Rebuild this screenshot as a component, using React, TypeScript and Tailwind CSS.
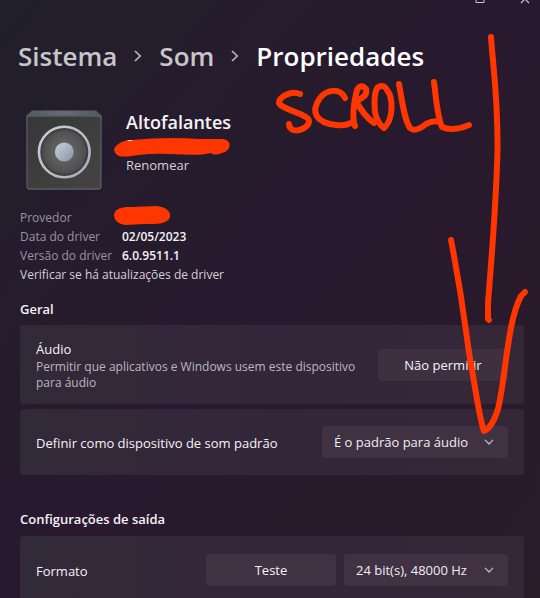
import React from "react";

function Chevron({ className }: { className: string }) {
  return (
    <svg aria-hidden="true" viewBox="0 0 10 10" className={className} fill="none" stroke="currentColor" strokeWidth="1.2" strokeLinecap="round" strokeLinejoin="round">
      <path d="M1.2 3.2 5 7l3.8-3.8" />
    </svg>
  );
}

function Crumb() {
  return (
    <svg aria-hidden="true" viewBox="0 0 8 12" className="h-3 w-2 shrink-0 text-[#b9b5bd]" fill="none" stroke="currentColor" strokeWidth="1.7">
      <path d="M1 1l5.2 5L1 11" />
    </svg>
  );
}

function Speaker() {
  return (
    <svg aria-hidden="true" viewBox="0 0 76 80" className="h-20 w-[76px] shrink-0">
      <defs>
        <linearGradient id="box" x1="0" y1="0" x2="1" y2="1">
          <stop offset="0" stopColor="#373737" />
          <stop offset="1" stopColor="#454443" />
        </linearGradient>
        <linearGradient id="lid" x1="0" y1="0" x2="1" y2="0">
          <stop offset="0" stopColor="#505860" />
          <stop offset="0.5" stopColor="#666d76" />
          <stop offset="1" stopColor="#505860" />
        </linearGradient>
        <linearGradient id="ring" x1="0" y1="0" x2="1" y2="1">
          <stop offset="0" stopColor="#c9d2dc" />
          <stop offset="1" stopColor="#a3aeba" />
        </linearGradient>
        <radialGradient id="cone">
          <stop offset="0.3" stopColor="#626262" />
          <stop offset="0.8" stopColor="#515151" />
          <stop offset="1" stopColor="#303134" />
        </radialGradient>
        <linearGradient id="cap" x1="0" y1="0" x2="1" y2="1">
          <stop offset="0" stopColor="#c8d2dd" />
          <stop offset="1" stopColor="#8994a1" />
        </linearGradient>
      </defs>
      <path d="M6 .5h64l5.5 5V10H.5V5.5z" fill="url(#lid)" />
      <rect x="1" y="6" width="74" height="73" rx="2.5" fill="url(#box)" stroke="#565d64" strokeWidth="1.3" />
      <circle cx="38.3" cy="42" r="25.3" fill="url(#cone)" stroke="url(#ring)" strokeWidth="2.6" />
      <circle cx="38.3" cy="42" r="9.4" fill="url(#cap)" />
    </svg>
  );
}

function Card({ className, children }: { className: string; children: React.ReactNode }) {
  return (
    <div className={`flex items-center justify-between rounded bg-linear-to-r from-[#312a38] via-[#342639] to-[#352738] px-4 ${className}`}>
      {children}
    </div>
  );
}

function Dropdown({ id, value, className }: { id: string; value: string; className: string }) {
  return (
    <div className={`relative ${className}`}>
      <select id={id} defaultValue={value} className="h-8 w-full appearance-none rounded bg-[#403243] pl-3 pr-8 pt-[2px] text-[13px] text-[#f0edf1]">
        <option>{value}</option>
      </select>
      <Chevron className="pointer-events-none absolute right-[14px] top-[11px] size-[10px] text-[#c5c0c8]" />
    </div>
  );
}

function Marker() {
  return (
    <svg aria-hidden="true" viewBox="0 0 540 598" className="pointer-events-none absolute left-0 top-0 h-[598px] w-[540px]" fill="none" stroke="#ff3600" strokeLinecap="round" strokeLinejoin="round">
      <g strokeWidth="6">
        <path d="M300 94C291 90 279 97 279 103C282 110 309 114 309 121C309 127 299 132 293 130Q289 128 289 124" />
        <path d="M345 98C340 88 327 89 320 98C310 112 316 123 336 125Q345 126 351 123" />
        <path d="M355 126C351 115 355 98 357 90Q361 83 366 89C368 95 361 99 356 101Q364 116 374 123" />
        <path d="M382 86C374 85 374 100 375 112Q377 123 384 128C394 119 393 97 387 90Q385 86 382 86" />
        <path d="M399 84C402 100 404 119 410 128Q415 133 426 124Q434 120 440 122" />
        <path d="M434 82C436 97 437 116 442 127Q452 132 469 125" />
        <path d="M491 37C493 67 498 96 497.5 150C496 210 491 264 488 303V319L489 320" />
        <path d="M451 240C466 317 465 333 472 370C476 392 479 416 484 431Q492 428 498 409C506 377 507 322 521 296L525 292" />
      </g>
      <g fill="#ff3600" stroke="none">
        <path d="M114 150C115 144 124 140 132 140C153 138 177 137 199 139L223 139C233 141 231 151 222 153Q214 156 211 153C196 157 171 153 153 154C139 154 126 158 119 156Q115 154 114 150z" />
        <path d="M114 215C115 208 122 207 131 207L156 206C166 207 171 211 170 217C168 224 157 224 145 224L125 225Q114 223 114 215z" />
      </g>
      <path d="M128 140.5h4" stroke="#d9d4dc" strokeWidth="1" />
    </svg>
  );
}

export default function App() {
  return (
    <div className="relative h-screen overflow-hidden bg-linear-to-br from-[#211f2b] via-[#28192e] to-[#291b28] font-['Open_Sans','Noto_Sans',sans-serif] text-[#f5f3f6]">
      <header className="flex h-9 items-start justify-end gap-[35px] pr-[10px] text-[#c9c5cd]">
        <button aria-label="Maximizar" className="h-1">
          <svg aria-hidden="true" viewBox="0 0 10 4" className="h-1 w-[10px]" fill="none" stroke="currentColor">
            <path d="M1 0v2.5h8V0" />
          </svg>
        </button>
        <button aria-label="Fechar" className="h-1">
          <svg aria-hidden="true" viewBox="0 0 10 4" className="h-1 w-[10px]" fill="none" stroke="currentColor" strokeWidth="1.2">
            <path d="M1 3l4-4 4 4" />
          </svg>
        </button>
      </header>
      <nav className="flex h-10 items-center gap-[17px] pl-[18px] text-[26px] font-semibold">
        <a href="#sistema" className="text-[#c9c6ca]">Sistema</a>
        <Crumb />
        <a href="#som" className="text-[#c9c6ca]">Som</a>
        <Crumb />
        <h1 className="text-white">Propriedades</h1>
      </nav>
      <main className="pl-5 pr-4">
        <section className="flex gap-6 pl-[6px] pt-[34px]">
          <Speaker />
          <div className="flex flex-col items-start">
            <h2 className="text-lg font-semibold leading-6">Altofalantes</h2>
            <button className="mt-[21px] text-[13px] leading-5 text-[#d5d1d8]">Renomear</button>
          </div>
        </section>
        <dl className="mt-[18px] grid grid-cols-[102px_1fr] text-xs leading-[19px]">
          <dt className="text-[#9993a0]">Provedor</dt>
          <dd />
          <dt className="text-[#9993a0]">Data do driver</dt>
          <dd className="font-semibold">02/05/2023</dd>
          <dt className="text-[#9993a0]">Versão do driver</dt>
          <dd className="font-semibold">6.0.9511.1</dd>
        </dl>
        <a href="#atualizacoes" className="block text-xs leading-5 text-[#d5d1d8]">Verificar se há atualizações de driver</a>
        <h2 className="mt-[14px] text-[13px] font-semibold leading-5">Geral</h2>
        <Card className="mt-[6px] h-[79px]">
          <div className="w-[320px]">
            <h3 className="text-[13px] leading-5">Áudio</h3>
            <p className="text-xs leading-4 text-[#bcb6c0]">Permitir que aplicativos e Windows usem este dispositivo para áudio</p>
          </div>
          <button className="h-8 w-[130px] rounded bg-[#3e3041] pt-[2px] text-[13px]">Não permitir</button>
        </Card>
        <Card className="mt-[5px] h-[66px]">
          <label htmlFor="padrao" className="pt-1 text-[13px]">Definir como dispositivo de som padrão</label>
          <Dropdown id="padrao" value="É o padrão para áudio" className="w-[186px]" />
        </Card>
        <h2 className="mt-[34px] text-[13px] font-semibold leading-5">Configurações de saída</h2>
        <Card className="mt-[7px] h-[68px]">
          <label htmlFor="formato" className="pt-1 text-[13px]">Formato</label>
          <div className="flex gap-2">
            <button className="h-8 w-[130px] rounded bg-[#403243] pt-[2px] text-[13px]">Teste</button>
            <Dropdown id="formato" value="24 bit(s), 48000 Hz" className="w-[164px]" />
          </div>
        </Card>
      </main>
      <Marker />
    </div>
  );
}
